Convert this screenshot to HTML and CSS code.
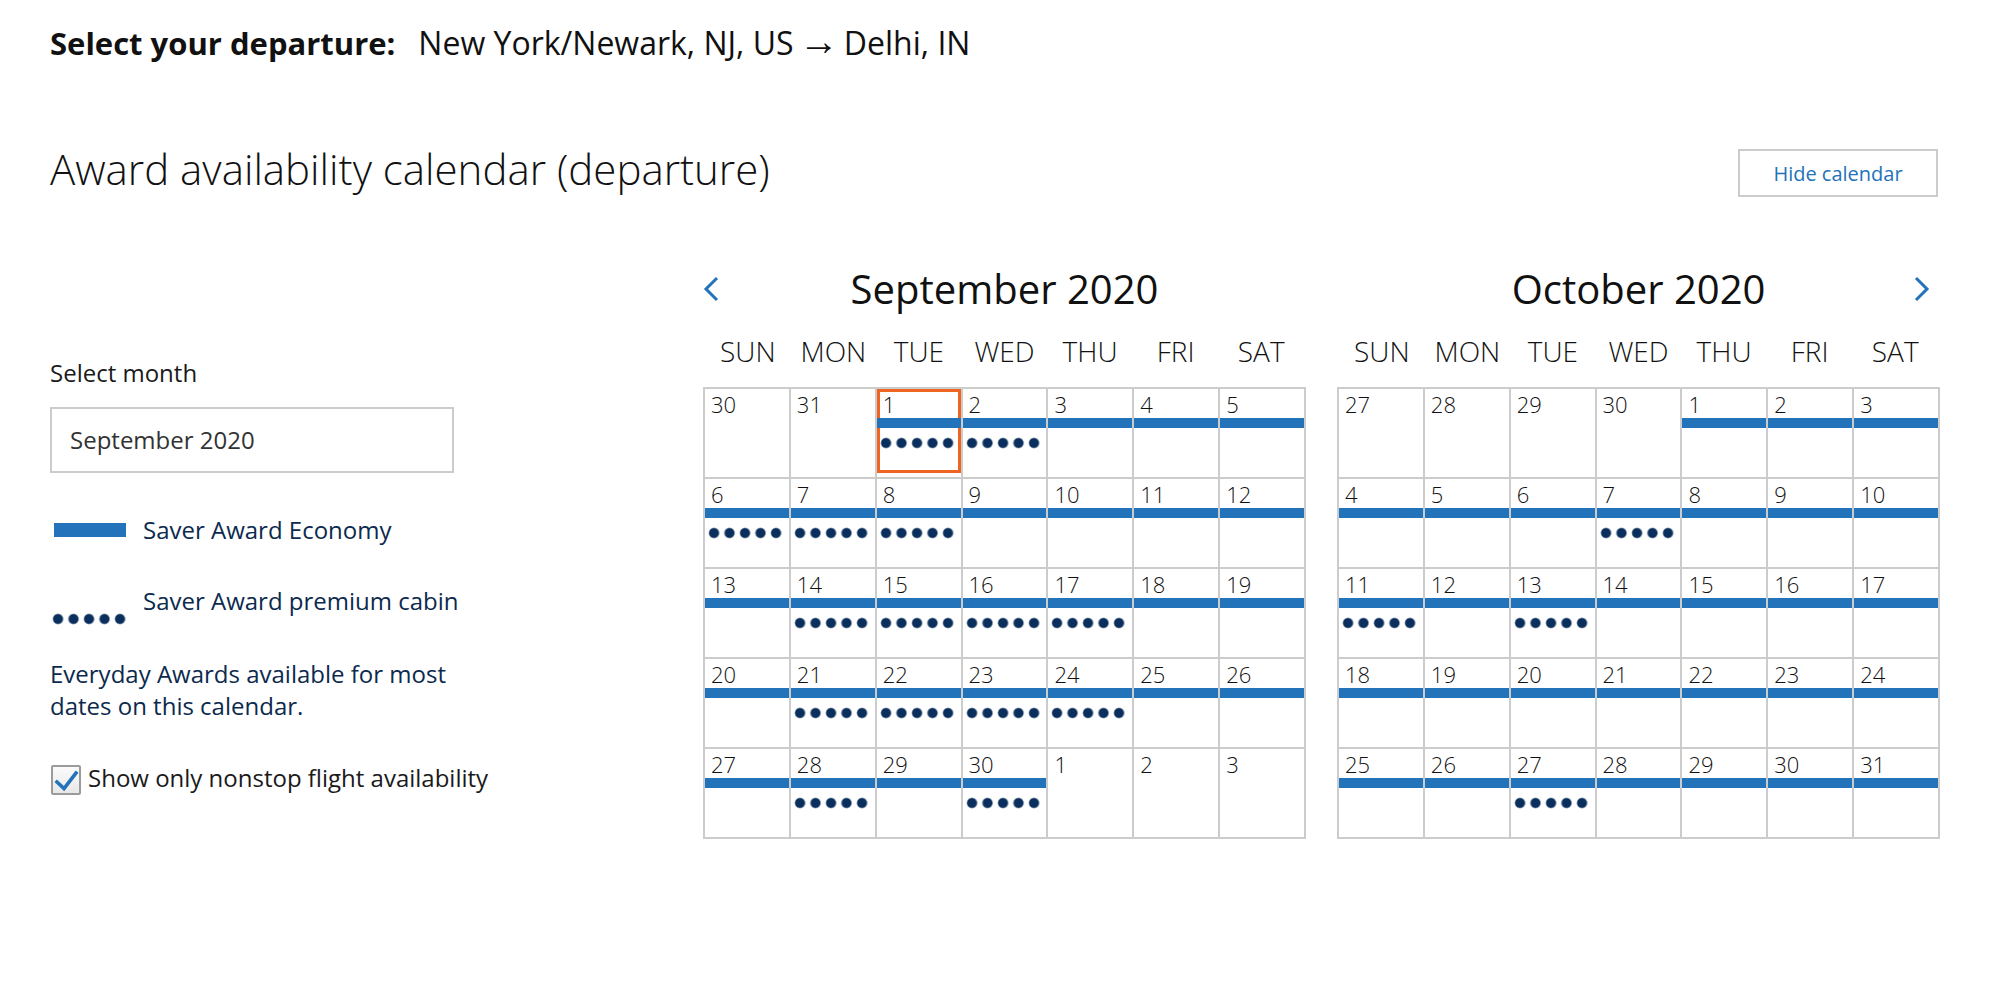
FILE: index.html
```html
<!DOCTYPE html>
<html lang="en">
<head>
<meta charset="utf-8">
<title>Award availability calendar</title>
<link rel="stylesheet" href="styles.css">
</head>
<body>
<div class="page">
  <p class="route"><span class="route-label">Select your departure:</span><span class="route-value">New York/Newark, NJ, US<span class="arrow"> → </span>Delhi, IN</span></p>

  <div class="title-row">
    <h1 class="title">Award availability calendar (departure)</h1>
    <button class="hide-btn" type="button">Hide calendar</button>
  </div>

  <div class="main">
    <aside class="side">
      <div class="field-label">Select month</div>
      <div class="select-box">September 2020</div>

      <div class="legend legend-eco">
        <span class="legend-bar"></span>
        <span class="legend-text">Saver Award Economy</span>
      </div>
      <div class="legend legend-prem">
        <span class="legend-dots"></span>
        <span class="legend-text">Saver Award premium cabin</span>
      </div>
      <p class="note">Everyday Awards available for most dates on this calendar.</p>
      <label class="check-row">
        <span class="checkbox"><svg width="26" height="26" viewBox="0 0 26 26"><path d="M4 15 L11 21.5 L23 6" fill="none" stroke="#2372ba" stroke-width="3.6" stroke-linecap="square"/></svg></span>
        <span class="check-text">Show only nonstop flight availability</span>
      </label>
    </aside>

    <div class="cals">
      <section class="cal">
        <div class="cal-head">
          <span class="nav prev"><svg width="16" height="26" viewBox="0 0 16 26"><path d="M14 2 L3 13 L14 24" fill="none" stroke="#2372ba" stroke-width="3"/></svg></span>
          <h2 class="month">September 2020</h2>
          <span class="nav next"></span>
        </div>
        <div class="weekdays"><span>SUN</span><span>MON</span><span>TUE</span><span>WED</span><span>THU</span><span>FRI</span><span>SAT</span></div>
        <div class="grid">
          <div class="day"><span class="num">30</span><span class="bar"></span><span class="dots"></span></div>
          <div class="day"><span class="num">31</span><span class="bar"></span><span class="dots"></span></div>
          <div class="day eco prem sel"><span class="num">1</span><span class="bar"></span><span class="dots"></span></div>
          <div class="day eco prem"><span class="num">2</span><span class="bar"></span><span class="dots"></span></div>
          <div class="day eco"><span class="num">3</span><span class="bar"></span><span class="dots"></span></div>
          <div class="day eco"><span class="num">4</span><span class="bar"></span><span class="dots"></span></div>
          <div class="day eco"><span class="num">5</span><span class="bar"></span><span class="dots"></span></div>

          <div class="day eco prem"><span class="num">6</span><span class="bar"></span><span class="dots"></span></div>
          <div class="day eco prem"><span class="num">7</span><span class="bar"></span><span class="dots"></span></div>
          <div class="day eco prem"><span class="num">8</span><span class="bar"></span><span class="dots"></span></div>
          <div class="day eco"><span class="num">9</span><span class="bar"></span><span class="dots"></span></div>
          <div class="day eco"><span class="num">10</span><span class="bar"></span><span class="dots"></span></div>
          <div class="day eco"><span class="num">11</span><span class="bar"></span><span class="dots"></span></div>
          <div class="day eco"><span class="num">12</span><span class="bar"></span><span class="dots"></span></div>

          <div class="day eco"><span class="num">13</span><span class="bar"></span><span class="dots"></span></div>
          <div class="day eco prem"><span class="num">14</span><span class="bar"></span><span class="dots"></span></div>
          <div class="day eco prem"><span class="num">15</span><span class="bar"></span><span class="dots"></span></div>
          <div class="day eco prem"><span class="num">16</span><span class="bar"></span><span class="dots"></span></div>
          <div class="day eco prem"><span class="num">17</span><span class="bar"></span><span class="dots"></span></div>
          <div class="day eco"><span class="num">18</span><span class="bar"></span><span class="dots"></span></div>
          <div class="day eco"><span class="num">19</span><span class="bar"></span><span class="dots"></span></div>

          <div class="day eco"><span class="num">20</span><span class="bar"></span><span class="dots"></span></div>
          <div class="day eco prem"><span class="num">21</span><span class="bar"></span><span class="dots"></span></div>
          <div class="day eco prem"><span class="num">22</span><span class="bar"></span><span class="dots"></span></div>
          <div class="day eco prem"><span class="num">23</span><span class="bar"></span><span class="dots"></span></div>
          <div class="day eco prem"><span class="num">24</span><span class="bar"></span><span class="dots"></span></div>
          <div class="day eco"><span class="num">25</span><span class="bar"></span><span class="dots"></span></div>
          <div class="day eco"><span class="num">26</span><span class="bar"></span><span class="dots"></span></div>

          <div class="day eco"><span class="num">27</span><span class="bar"></span><span class="dots"></span></div>
          <div class="day eco prem"><span class="num">28</span><span class="bar"></span><span class="dots"></span></div>
          <div class="day eco"><span class="num">29</span><span class="bar"></span><span class="dots"></span></div>
          <div class="day eco prem"><span class="num">30</span><span class="bar"></span><span class="dots"></span></div>
          <div class="day"><span class="num">1</span><span class="bar"></span><span class="dots"></span></div>
          <div class="day"><span class="num">2</span><span class="bar"></span><span class="dots"></span></div>
          <div class="day"><span class="num">3</span><span class="bar"></span><span class="dots"></span></div>
        </div>
      </section>

      <section class="cal">
        <div class="cal-head">
          <span class="nav prev"></span>
          <h2 class="month">October 2020</h2>
          <span class="nav next"><svg width="16" height="26" viewBox="0 0 16 26"><path d="M2 2 L13 13 L2 24" fill="none" stroke="#2372ba" stroke-width="3"/></svg></span>
        </div>
        <div class="weekdays"><span>SUN</span><span>MON</span><span>TUE</span><span>WED</span><span>THU</span><span>FRI</span><span>SAT</span></div>
        <div class="grid">
          <div class="day"><span class="num">27</span><span class="bar"></span><span class="dots"></span></div>
          <div class="day"><span class="num">28</span><span class="bar"></span><span class="dots"></span></div>
          <div class="day"><span class="num">29</span><span class="bar"></span><span class="dots"></span></div>
          <div class="day"><span class="num">30</span><span class="bar"></span><span class="dots"></span></div>
          <div class="day eco"><span class="num">1</span><span class="bar"></span><span class="dots"></span></div>
          <div class="day eco"><span class="num">2</span><span class="bar"></span><span class="dots"></span></div>
          <div class="day eco"><span class="num">3</span><span class="bar"></span><span class="dots"></span></div>

          <div class="day eco"><span class="num">4</span><span class="bar"></span><span class="dots"></span></div>
          <div class="day eco"><span class="num">5</span><span class="bar"></span><span class="dots"></span></div>
          <div class="day eco"><span class="num">6</span><span class="bar"></span><span class="dots"></span></div>
          <div class="day eco prem"><span class="num">7</span><span class="bar"></span><span class="dots"></span></div>
          <div class="day eco"><span class="num">8</span><span class="bar"></span><span class="dots"></span></div>
          <div class="day eco"><span class="num">9</span><span class="bar"></span><span class="dots"></span></div>
          <div class="day eco"><span class="num">10</span><span class="bar"></span><span class="dots"></span></div>

          <div class="day eco prem"><span class="num">11</span><span class="bar"></span><span class="dots"></span></div>
          <div class="day eco"><span class="num">12</span><span class="bar"></span><span class="dots"></span></div>
          <div class="day eco prem"><span class="num">13</span><span class="bar"></span><span class="dots"></span></div>
          <div class="day eco"><span class="num">14</span><span class="bar"></span><span class="dots"></span></div>
          <div class="day eco"><span class="num">15</span><span class="bar"></span><span class="dots"></span></div>
          <div class="day eco"><span class="num">16</span><span class="bar"></span><span class="dots"></span></div>
          <div class="day eco"><span class="num">17</span><span class="bar"></span><span class="dots"></span></div>

          <div class="day eco"><span class="num">18</span><span class="bar"></span><span class="dots"></span></div>
          <div class="day eco"><span class="num">19</span><span class="bar"></span><span class="dots"></span></div>
          <div class="day eco"><span class="num">20</span><span class="bar"></span><span class="dots"></span></div>
          <div class="day eco"><span class="num">21</span><span class="bar"></span><span class="dots"></span></div>
          <div class="day eco"><span class="num">22</span><span class="bar"></span><span class="dots"></span></div>
          <div class="day eco"><span class="num">23</span><span class="bar"></span><span class="dots"></span></div>
          <div class="day eco"><span class="num">24</span><span class="bar"></span><span class="dots"></span></div>

          <div class="day eco"><span class="num">25</span><span class="bar"></span><span class="dots"></span></div>
          <div class="day eco"><span class="num">26</span><span class="bar"></span><span class="dots"></span></div>
          <div class="day eco prem"><span class="num">27</span><span class="bar"></span><span class="dots"></span></div>
          <div class="day eco"><span class="num">28</span><span class="bar"></span><span class="dots"></span></div>
          <div class="day eco"><span class="num">29</span><span class="bar"></span><span class="dots"></span></div>
          <div class="day eco"><span class="num">30</span><span class="bar"></span><span class="dots"></span></div>
          <div class="day eco"><span class="num">31</span><span class="bar"></span><span class="dots"></span></div>
        </div>
      </section>
    </div>
  </div>
</div>
</body>
</html>
```

FILE: styles.css
```css
html, body {
  margin: 0;
  padding: 0;
  background: #fff;
}

body {
  font-family: "Open Sans", "Noto Sans", "DejaVu Sans", sans-serif;
  color: #111;
}

.page {
  padding: 23px 52px 0 50px;
}

.route {
  margin: 0;
  height: 40px;
  font-size: 32px;
  line-height: 40px;
  color: #111;
  white-space: nowrap;
}

.route-label {
  font-size: 31px;
  font-weight: 700;
  margin-right: 23px;
}

.arrow {
  font-family: "Liberation Sans", "DejaVu Sans", sans-serif;
  font-size: 40px;
  line-height: 0;
  word-spacing: -6px;
}

.title-row {
  display: flex;
  justify-content: space-between;
  align-items: flex-start;
  margin-top: 82px;
}

.title {
  margin: 0;
  font-size: 42px;
  font-weight: 300;
  line-height: 48px;
  color: #111;
}

.hide-btn {
  margin-top: 4px;
  width: 200px;
  height: 48px;
  box-sizing: border-box;
  border: 2px solid #ccc;
  background: #fff;
  color: #2372ba;
  font-family: "Open Sans", "Noto Sans", sans-serif;
  font-size: 20px;
  padding: 0;
}

.main {
  display: flex;
  margin-top: 70px;
}

.side {
  width: 653px;
  flex: none;
  padding-top: 90px;
  box-sizing: border-box;
}

.field-label {
  font-size: 24px;
  line-height: 32px;
  color: #1a1a1a;
}

.select-box {
  margin-top: 18px;
  width: 404px;
  height: 66px;
  box-sizing: border-box;
  border: 2px solid #ccc;
  padding: 15px 18px;
  font-size: 24px;
  line-height: 32px;
  color: #333;
}

.legend {
  display: flex;
  align-items: center;
  color: #0c2a4e;
  font-size: 24px;
  line-height: 32px;
}

.legend-eco {
  margin-top: 41px;
}

.legend-bar {
  width: 72px;
  height: 14px;
  margin-left: 4px;
  margin-right: 17px;
  background: #2273b9;
}

.legend-prem {
  margin-top: 39px;
  align-items: flex-start;
}

.legend-dots {
  width: 76px;
  height: 12px;
  margin-left: 2px;
  margin-right: 15px;
  margin-top: 28px;
  background: radial-gradient(circle at 6px 6px, #0a2f5c 4.3px, rgba(10, 47, 92, 0) 5.8px) 0 0 / 15.5px 12px repeat-x;
}

.note {
  margin: 33px 0 0;
  width: 420px;
  font-size: 24px;
  line-height: 32px;
  color: #0c2a4e;
}

.check-row {
  display: flex;
  align-items: center;
  margin-top: 39px;
  font-size: 24px;
  line-height: 32px;
  color: #1a1a1a;
}

.checkbox {
  width: 30px;
  height: 30px;
  box-sizing: border-box;
  border: 2px solid #9b9b9b;
  border-radius: 2px;
  background: linear-gradient(#fbfbfb, #e8e8e8);
  margin-left: 1px;
  margin-right: 7px;
  margin-top: 4px;
  display: flex;
  align-items: center;
  justify-content: center;
}

.checkbox svg {
  display: block;
}

.cals {
  display: flex;
  gap: 31px;
}

.cal {
  width: 603px;
}

.cal-head {
  display: grid;
  grid-template-columns: 60px 1fr 60px;
  align-items: center;
  height: 44px;
}

.nav {
  display: flex;
  align-items: center;
}

.nav.prev {
  justify-content: flex-start;
}

.nav.next {
  justify-content: flex-end;
  padding-right: 10px;
}

.nav svg {
  display: block;
}

.month {
  margin: 0;
  font-size: 40px;
  font-weight: 400;
  line-height: 44px;
  text-align: center;
  color: #111;
}

.weekdays {
  display: grid;
  grid-template-columns: repeat(7, 1fr);
  margin-top: 22px;
  padding: 0 2px;
  font-size: 28px;
  font-weight: 300;
  line-height: 36px;
  text-align: center;
  color: #111;
}

.grid {
  display: grid;
  grid-template-columns: repeat(7, 1fr);
  gap: 2px;
  padding: 2px;
  margin-top: 18px;
  background: #ccc;
}

.day {
  position: relative;
  height: 88px;
  background: #fff;
}

.num {
  display: block;
  padding: 2px 6px 0;
  font-size: 22px;
  font-weight: 300;
  line-height: 26px;
  color: #111;
}

.bar {
  position: relative;
  z-index: 1;
  display: block;
  height: 10px;
  margin-top: 1px;
}

.eco .bar {
  background: #2273b9;
}

.dots {
  display: block;
  width: 76px;
  height: 12px;
  margin: 9px 0 0 3px;
}

.prem .dots {
  background: radial-gradient(circle at 6px 6px, #0a2f5c 4.3px, rgba(10, 47, 92, 0) 5.8px) 0 0 / 15.5px 12px repeat-x;
}

.sel::after {
  content: "";
  position: absolute;
  left: 0;
  top: 0;
  right: 0;
  bottom: 4px;
  border: 3px solid #ef6421;
}
```
